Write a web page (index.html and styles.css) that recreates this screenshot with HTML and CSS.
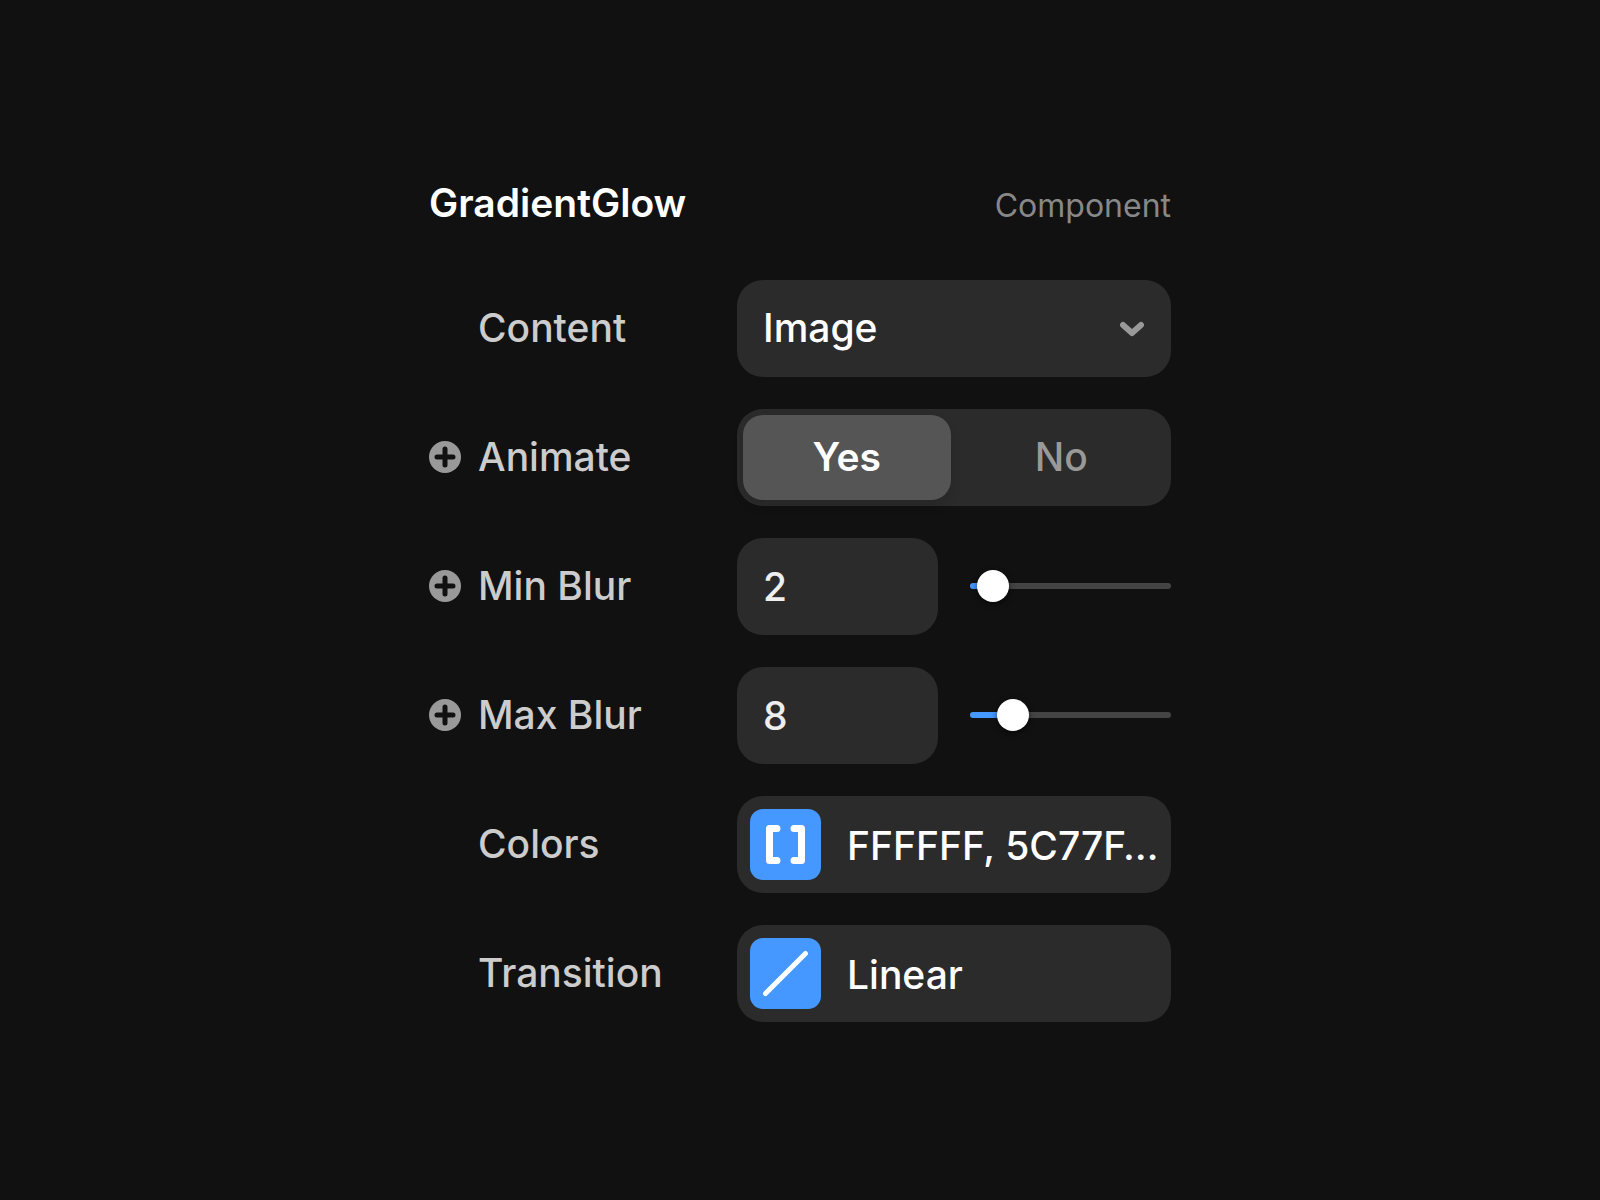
FILE: index.html
```
<!DOCTYPE html>
<html lang="en">
<head>
    <meta charset="UTF-8">
    <meta name="viewport" content="width=device-width, initial-scale=1.0">
    <title>GradientGlow</title>
    <link rel="stylesheet" href="styles.css">
</head>
<body>
    <form class="panel">
        <header class="panel-header">
            <h1>GradientGlow</h1>
            <span class="kind">Component</span>
        </header>

        <div class="row">
            <div class="name">
                <label for="content">Content</label>
            </div>
            <div class="select">
                <select class="field" id="content">
                    <option>Image</option>
                </select>
                <svg class="chevron" viewBox="0 0 26 16" aria-hidden="true">
                    <path d="M4 4l9 8 9-8" />
                </svg>
            </div>
        </div>

        <div class="row">
            <div class="name">
                <button type="button" class="add" aria-label="Add Animate variable">
                    <svg viewBox="0 0 32 32" aria-hidden="true">
                        <circle cx="16" cy="16" r="16" />
                        <path d="M16 8v16M8 16h16" />
                    </svg>
                </button>
                <span class="label" id="animate-label">Animate</span>
            </div>
            <div class="segmented" role="radiogroup" aria-labelledby="animate-label">
                <input type="radio" name="animate" id="animate-yes" checked>
                <label for="animate-yes">Yes</label>
                <input type="radio" name="animate" id="animate-no">
                <label for="animate-no">No</label>
            </div>
        </div>

        <div class="row">
            <div class="name">
                <button type="button" class="add" aria-label="Add Min Blur variable">
                    <svg viewBox="0 0 32 32" aria-hidden="true">
                        <circle cx="16" cy="16" r="16" />
                        <path d="M16 8v16M8 16h16" />
                    </svg>
                </button>
                <label for="min-blur">Min Blur</label>
            </div>
            <div class="number">
                <input class="field" type="text" inputmode="numeric" id="min-blur" value="2">
                <input class="slider" type="range" min="0" max="50" value="2" style="--fill: 4%" aria-label="Min Blur">
            </div>
        </div>

        <div class="row">
            <div class="name">
                <button type="button" class="add" aria-label="Add Max Blur variable">
                    <svg viewBox="0 0 32 32" aria-hidden="true">
                        <circle cx="16" cy="16" r="16" />
                        <path d="M16 8v16M8 16h16" />
                    </svg>
                </button>
                <label for="max-blur">Max Blur</label>
            </div>
            <div class="number">
                <input class="field" type="text" inputmode="numeric" id="max-blur" value="8">
                <input class="slider" type="range" min="0" max="50" value="8" style="--fill: 16%" aria-label="Max Blur">
            </div>
        </div>

        <div class="row">
            <div class="name">
                <label for="colors">Colors</label>
            </div>
            <button type="button" class="field picker" id="colors">
                <svg class="swatch" viewBox="0 0 71 71" aria-hidden="true">
                    <path class="bracket" d="M27 19.5h-7.5v32H27M44 19.5h7.5v32H44" />
                </svg>
                <span>FFFFFF, 5C77F…</span>
            </button>
        </div>

        <div class="row">
            <div class="name">
                <label for="transition">Transition</label>
            </div>
            <button type="button" class="field picker" id="transition">
                <svg class="swatch" viewBox="0 0 71 71" aria-hidden="true">
                    <path class="line" d="M15.5 55.5l40-40" />
                </svg>
                <span>Linear</span>
            </button>
        </div>
    </form>

    <script>
        document.querySelectorAll('.number').forEach((group) => {
            const [text, slider] = group.querySelectorAll('input');

            function update(value) {
                slider.value = value;
                slider.style.setProperty('--fill', slider.value / slider.max * 100 + '%');
            }

            slider.addEventListener('input', () => {
                text.value = slider.value;
                update(slider.value);
            });
            text.addEventListener('change', () => update(text.value));
        });
    </script>
</body>
</html>
```
FILE: styles.css
```
* {
    box-sizing: border-box;
}

body {
    display: flex;
    justify-content: center;
    align-items: center;
    min-height: 100vh;
    margin: 0;
    background: #111;
    color: #fff;
    font: 500 39px/48px Inter, sans-serif;
}

.panel {
    display: flex;
    flex-direction: column;
    gap: 32px;
    width: 100%;
    max-width: 742px;
}

.panel-header {
    display: flex;
    justify-content: space-between;
    align-items: baseline;
    padding-bottom: 18px;
}

h1 {
    margin: 0;
    font-size: 39px;
    font-weight: 600;
}

.kind {
    color: #888;
    font-size: 32px;
    font-weight: 400;
}

.row {
    display: grid;
    grid-template-columns: 308px minmax(0, 1fr);
    align-items: center;
}

.name {
    display: grid;
    grid-template-columns: 32px 1fr;
    column-gap: 17px;
    align-items: center;
    color: #ccc;
}

.name label, .name .label {
    grid-column: 2;
}

.add {
    display: flex;
    padding: 0;
    border: none;
    background: none;
    cursor: pointer;
}

.add svg {
    width: 32px;
    height: 32px;
    fill: #999;
    stroke: #111;
    stroke-width: 5;
    stroke-linecap: round;
}

.add circle {
    stroke: none;
}

.field {
    width: 100%;
    height: 97px;
    padding: 0 26px;
    border: none;
    border-radius: 26px;
    background: #2b2b2b;
    color: #fff;
    font: inherit;
    appearance: none;
}

input.field {
    color: #eee;
}

.select {
    position: relative;
}

.chevron {
    position: absolute;
    top: 41px;
    right: 26px;
    width: 26px;
    height: 16px;
    fill: none;
    stroke: #999;
    stroke-width: 6;
    stroke-linecap: round;
    stroke-linejoin: round;
    pointer-events: none;
}

.segmented {
    display: grid;
    grid-template-columns: 1fr 1fr;
    gap: 7px;
    height: 97px;
    padding: 6px;
    border-radius: 26px;
    background: #2b2b2b;
}

.segmented input {
    position: absolute;
    opacity: 0;
    pointer-events: none;
}

.segmented label {
    display: flex;
    justify-content: center;
    align-items: center;
    border-radius: 20px;
    color: #999;
    cursor: pointer;
}

.segmented input:checked + label {
    background: #555;
    box-shadow: 0 6px 12px rgba(0, 0, 0, 0.1);
    color: #fff;
    font-weight: 600;
}

.number {
    display: grid;
    grid-template-columns: 1fr 1fr;
    gap: 32px;
    align-items: center;
}

.slider {
    width: 100%;
    height: 32px;
    margin: 0;
    background: none;
    appearance: none;
}

.slider::-webkit-slider-runnable-track {
    height: 6px;
    border-radius: 3px;
    background: linear-gradient(to right, #4498ff calc(16px + var(--fill) * 0.84), #444 0);
}

.slider::-webkit-slider-thumb {
    width: 32px;
    height: 32px;
    margin-top: -13px;
    border-radius: 50%;
    background: #fff;
    box-shadow: 0 2px 6px rgba(0, 0, 0, 0.6);
    appearance: none;
}

.picker {
    display: flex;
    align-items: center;
    gap: 26px;
    padding: 0 12px 0 13px;
    text-align: left;
    white-space: nowrap;
    cursor: pointer;
}

.picker span {
    padding-top: 3px;
}

.swatch {
    flex: none;
    width: 71px;
    height: 71px;
    border-radius: 13px;
    background: #4498ff;
    fill: none;
    stroke: #fff;
    stroke-linecap: round;
    stroke-linejoin: round;
}

.bracket {
    stroke-width: 7;
}

.line {
    stroke-width: 5;
}
```
